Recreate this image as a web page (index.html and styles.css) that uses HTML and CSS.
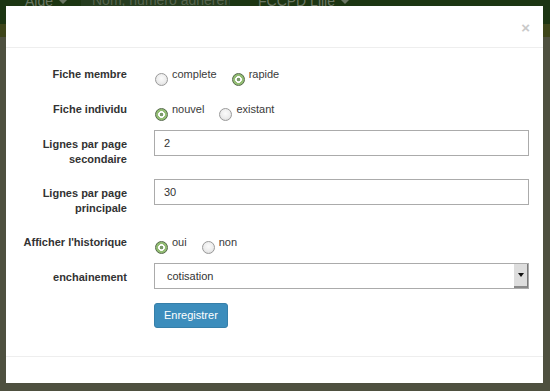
FILE: index.html
```html
<!DOCTYPE html>
<html lang="fr">
<head>
<meta charset="utf-8">
<title>Préférences</title>
<link rel="stylesheet" href="styles.css">
</head>
<body>
<div class="page">
  <header class="navbar">
    <div class="nav-inner">
      <span class="nav-item nav-aide">Aide <span class="caret"></span></span>
      <div class="nav-search">Nom, numéro adhérent</div>
      <span class="nav-item nav-club">FCCPD Lille <span class="caret"></span></span>
    </div>
  </header>
  <div class="band"></div>
</div>

<div class="modal">
  <div class="modal-header">
    <span class="close">×</span>
  </div>
  <div class="modal-body">
    <form class="form">
      <div class="form-group radio-group">
        <div class="control-label">Fiche membre</div>
        <div class="controls">
          <label class="radio"><span class="dot"></span><span class="rtext">complete</span></label>
          <label class="radio"><span class="dot checked"></span><span class="rtext">rapide</span></label>
        </div>
      </div>
      <div class="form-group radio-group">
        <div class="control-label">Fiche individu</div>
        <div class="controls">
          <label class="radio"><span class="dot checked"></span><span class="rtext">nouvel</span></label>
          <label class="radio"><span class="dot"></span><span class="rtext">existant</span></label>
        </div>
      </div>
      <div class="form-group">
        <div class="control-label">Lignes par page<br>secondaire</div>
        <div class="field"><input class="input" type="text" value="2"></div>
      </div>
      <div class="form-group">
        <div class="control-label">Lignes par page<br>principale</div>
        <div class="field"><input class="input" type="text" value="30"></div>
      </div>
      <div class="form-group radio-group">
        <div class="control-label">Afficher l'historique</div>
        <div class="controls">
          <label class="radio"><span class="dot checked"></span><span class="rtext">oui</span></label>
          <label class="radio"><span class="dot"></span><span class="rtext">non</span></label>
        </div>
      </div>
      <div class="form-group">
        <div class="control-label">enchainement</div>
        <div class="field">
          <div class="select">
            <span class="select-text">cotisation</span>
            <span class="select-arrow"><span class="tri"></span></span>
          </div>
        </div>
      </div>
      <div class="actions">
        <button type="button" class="btn">Enregistrer</button>
      </div>
    </form>
  </div>
  <div class="modal-footer"></div>
</div>
</body>
</html>
```
FILE: styles.css
```css
* { box-sizing: border-box; }
html, body { margin: 0; padding: 0; }
body {
  width: 550px;
  height: 391px;
  overflow: hidden;
  background: #4e503f;
  font-family: "Liberation Sans", Arial, sans-serif;
}

.page { width: 100%; }
.navbar {
  height: 24px;
  background: #1c3512;
  overflow: hidden;
}
.nav-inner {
  display: flex;
  align-items: center;
  margin-top: -9px;
  height: 20px;
  font-size: 14px;
  color: #6b7663;
  white-space: nowrap;
}
.nav-aide { margin-left: 25px; width: 56px; flex: none; }
.nav-search {
  flex: none;
  width: 149px;
  height: 22px;
  background: #263c1f;
  padding-left: 11px;
  line-height: 20px;
  color: #56644e;
  overflow: hidden;
}
.nav-club { margin-left: 28px; flex: none; }
.caret {
  display: inline-block;
  width: 0; height: 0;
  border-left: 4px solid transparent;
  border-right: 4px solid transparent;
  border-top: 4px solid #6b7663;
  vertical-align: middle;
  margin-left: 2px;
}
.band { height: 13px; background: #3e4519; }

.modal {
  position: fixed;
  top: 6px;
  left: 6px;
  width: 537px;
  height: 377px;
  background: #fff;
  display: flex;
  flex-direction: column;
}
.modal-header {
  height: 42px;
  border-bottom: 1px solid #eeeeee;
  display: flex;
  justify-content: flex-end;
  align-items: center;
  padding-right: 13px;
}
.close {
  font-size: 15px;
  font-weight: bold;
  color: #c9c9c9;
  line-height: 15px;
  margin-top: 1px;
}
.modal-body {
  flex: 1;
  padding: 12px 14px 0 15px;
}
.modal-footer {
  height: 27px;
  border-top: 1px solid #eeeeee;
}

.form-group {
  display: flex;
  align-items: flex-start;
  margin-bottom: 12px;
}
.radio-group { height: 23px; }
.control-label {
  width: 106px;
  flex: none;
  text-align: right;
  padding-top: 7px;
  line-height: 15px;
  font-size: 11px;
  font-weight: bold;
  color: #333;
  white-space: nowrap;
}
.controls {
  margin-left: 27px;
  padding-top: 7px;
  display: flex;
}
.radio {
  display: flex;
  align-items: flex-start;
  margin-right: 14px;
  font-size: 11px;
  line-height: 14px;
  color: #3a3a3a;
}
.dot {
  width: 13px;
  height: 13px;
  border-radius: 50%;
  margin: 6px 4px 0 1px;
  border: 1px solid #9a9a9a;
  background: radial-gradient(circle at 50% 40%, #fbfbfb 0, #ececec 55%, #d4d4d4 100%);
  flex: none;
}
.dot.checked {
  border: 1px solid #566a4b;
  background: radial-gradient(circle, #7b9a6b 0 1.6px, #ffffff 2.1px 3.1px, #93bd74 3.6px);
}

.field {
  margin-left: 27px;
  flex: 1;
}
.input {
  display: block;
  width: 100%;
  height: 26px;
  border: 1px solid #ababab;
  border-radius: 0;
  padding: 0 9px;
  font-family: "Liberation Sans", Arial, sans-serif;
  font-size: 11px;
  color: #333;
  outline: none;
}
.select {
  display: flex;
  height: 26px;
  border: 1px solid #ababab;
  align-items: stretch;
}
.select-text {
  flex: 1;
  padding-left: 12px;
  font-size: 11px;
  line-height: 24px;
  color: #333;
}
.select-arrow {
  width: 14px;
  background: #dddddd;
  border-right: 1px solid #7a7a7a;
  border-bottom: 2px solid #8a8a8a;
  display: flex;
  align-items: center;
  justify-content: center;
}
.tri {
  width: 0; height: 0;
  border-left: 3px solid transparent;
  border-right: 3px solid transparent;
  border-top: 4px solid #111;
}

.actions {
  margin-top: 14px;
  padding-left: 133px;
  display: flex;
}
.btn {
  height: 25px;
  padding: 0 9px;
  background: #3c8dbc;
  border: 1px solid #367fa9;
  border-radius: 3px;
  color: #fff;
  font-family: "Liberation Sans", Arial, sans-serif;
  font-size: 11px;
  line-height: 23px;
}
```
